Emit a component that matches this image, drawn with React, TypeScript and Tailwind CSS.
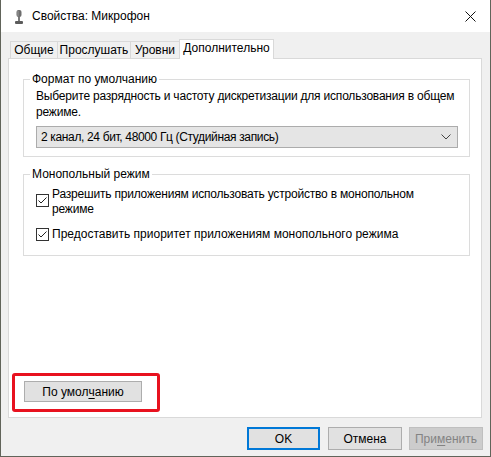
import React from "react";

const font = { fontFamily: '"Liberation Sans", "Noto Sans", sans-serif' };

const MicIcon = () => (
  <svg width="10" height="14" viewBox="0 0 10 14" className="block">
    <rect x="2.5" y="0" width="5" height="7" rx="2" fill="#6e6e6e" />
    <rect x="3.5" y="1" width="1" height="5" fill="#9a9a9a" />
    <rect x="4" y="7" width="2" height="4" fill="#7a7a7a" />
    <rect x="1" y="11" width="8" height="3" rx="1" fill="#5c5c5c" />
  </svg>
);

const CloseIcon = () => (
  <svg width="11" height="11" viewBox="0 0 11 11" className="block">
    <path d="M0.5 0.5 L10.5 10.5 M10.5 0.5 L0.5 10.5" stroke="#111" strokeWidth="1" />
  </svg>
);

const Check = () => (
  <span className="flex h-[13px] w-[13px] shrink-0 items-center justify-center border border-[#333] bg-white">
    <svg width="11" height="11" viewBox="0 0 11 11">
      <path d="M1.5 5.5 L4 8 L9.5 2.5" fill="none" stroke="#222" strokeWidth="1" />
    </svg>
  </span>
);

const tabs = [
  { title: "Общие", w: "w-[48px]" },
  { title: "Прослушать", w: "w-[74px]" },
  { title: "Уровни", w: "w-[50px]" },
];

export default function App() {
  return (
    <div
      className="flex h-[457px] w-[491px] flex-col border-x border-b border-[#61645a] bg-[#f0f0f0] text-[12px] text-black"
      style={font}
    >
      {/* title bar */}
      <div className="flex h-[32px] shrink-0 items-center bg-white">
        <div className="ml-[13px] mt-[1px]">
          <MicIcon />
        </div>
        <span className="ml-[8px] leading-[16px]">Свойства: Микрофон</span>
        <div className="ml-auto mr-[14px]">
          <CloseIcon />
        </div>
      </div>

      {/* tab strip */}
      <div className="ml-[9px] mt-[7px] flex h-[19px] items-end">
        {tabs.map((tab, i) => (
          <div
            key={tab.title}
            className={`flex h-[17px] items-center justify-center border-x border-t border-[#d9d9d9] bg-[#f0f0f0] leading-[14px] ${tab.w} ${
              i > 0 && "-ml-px"
            }`}
          >
            {tab.title}
          </div>
        ))}
        <div className="relative z-10 -mb-px -ml-px flex h-[20px] w-[95px] items-start justify-center border-x border-t border-[#d9d9d9] bg-white pt-[1px] leading-[14px]">
          Дополнительно
        </div>
      </div>

      {/* tab page */}
      <div className="ml-[7px] flex h-[360px] w-[474px] flex-col border border-[#d9d9d9] bg-white">
        <fieldset className="ml-[14px] mr-[11px] mt-[12px] border border-[#dcdcdc] pb-[8px] pl-[12px] pr-[11px] pt-[1px]">
          <legend className="-ml-[6px] px-[2px] leading-[16px]">Формат по умолчанию</legend>
          <p className="whitespace-nowrap leading-[16px] tracking-[-0.2px]">
            Выберите разрядность и частоту дискретизации для использования в общем
            <br />
            режиме.
          </p>
          <div className="mt-[6px] flex h-[22px] items-center border border-[#acacac] bg-[#e5e5e5] pl-[4px] pr-[6px]">
            <span className="leading-[16px] tracking-[-0.35px]">
              2 канал, 24 бит, 48000 Гц (Студийная запись)
            </span>
            <svg width="10" height="6" viewBox="0 0 10 6" className="ml-auto">
              <path d="M0.5 0.5 L5 5 L9.5 0.5" fill="none" stroke="#444" strokeWidth="1" />
            </svg>
          </div>
        </fieldset>

        <fieldset className="ml-[14px] mr-[11px] mt-[9px] border border-[#dcdcdc] pb-[13px] pl-[12px] pr-[11px] pt-[5px]">
          <legend className="-ml-[6px] px-[2px] leading-[16px]">Монопольный режим</legend>
          <div className="flex items-start">
            <div className="mt-[7px]">
              <Check />
            </div>
            <span className="ml-[3px] whitespace-nowrap leading-[15px] tracking-[-0.2px]">
              Разрешить приложениям использовать устройство в монопольном
              <br />
              режиме
            </span>
          </div>
          <div className="mt-[10px] flex items-center">
            <Check />
            <span className="ml-[3px] leading-[15px]">
              Предоставить приоритет приложениям монопольного режима
            </span>
          </div>
        </fieldset>

        {/* highlighted reset button */}
        <div className="mb-[5px] ml-[3px] mt-auto flex h-[39px] w-[148px] rounded-[3px] border-[3px] border-[#e8121f] pl-[9px] pt-[5px]">
          <button className="flex h-[21px] w-[118px] items-center justify-center border border-[#adadad] bg-[#e1e1e1] leading-[16px]">
            По умол<span className="underline underline-offset-2">ч</span>анию
          </button>
        </div>
      </div>

      {/* dialog buttons */}
      <div className="mr-[7px] mt-[9px] flex justify-end">
        <button className="flex h-[23px] w-[73px] items-center justify-center border-2 border-[#0078d7] bg-[#e1e1e1] leading-[16px]">
          OK
        </button>
        <button className="ml-[8px] flex h-[23px] w-[74px] items-center justify-center border border-[#adadad] bg-[#e1e1e1] leading-[16px]">
          Отмена
        </button>
        <button className="ml-[7px] flex h-[23px] w-[74px] items-center justify-center border border-[#bfbfbf] bg-[#cccccc] leading-[16px] text-[#838383]">
          При<span className="underline underline-offset-2">м</span>енить
        </button>
      </div>
    </div>
  );
}
